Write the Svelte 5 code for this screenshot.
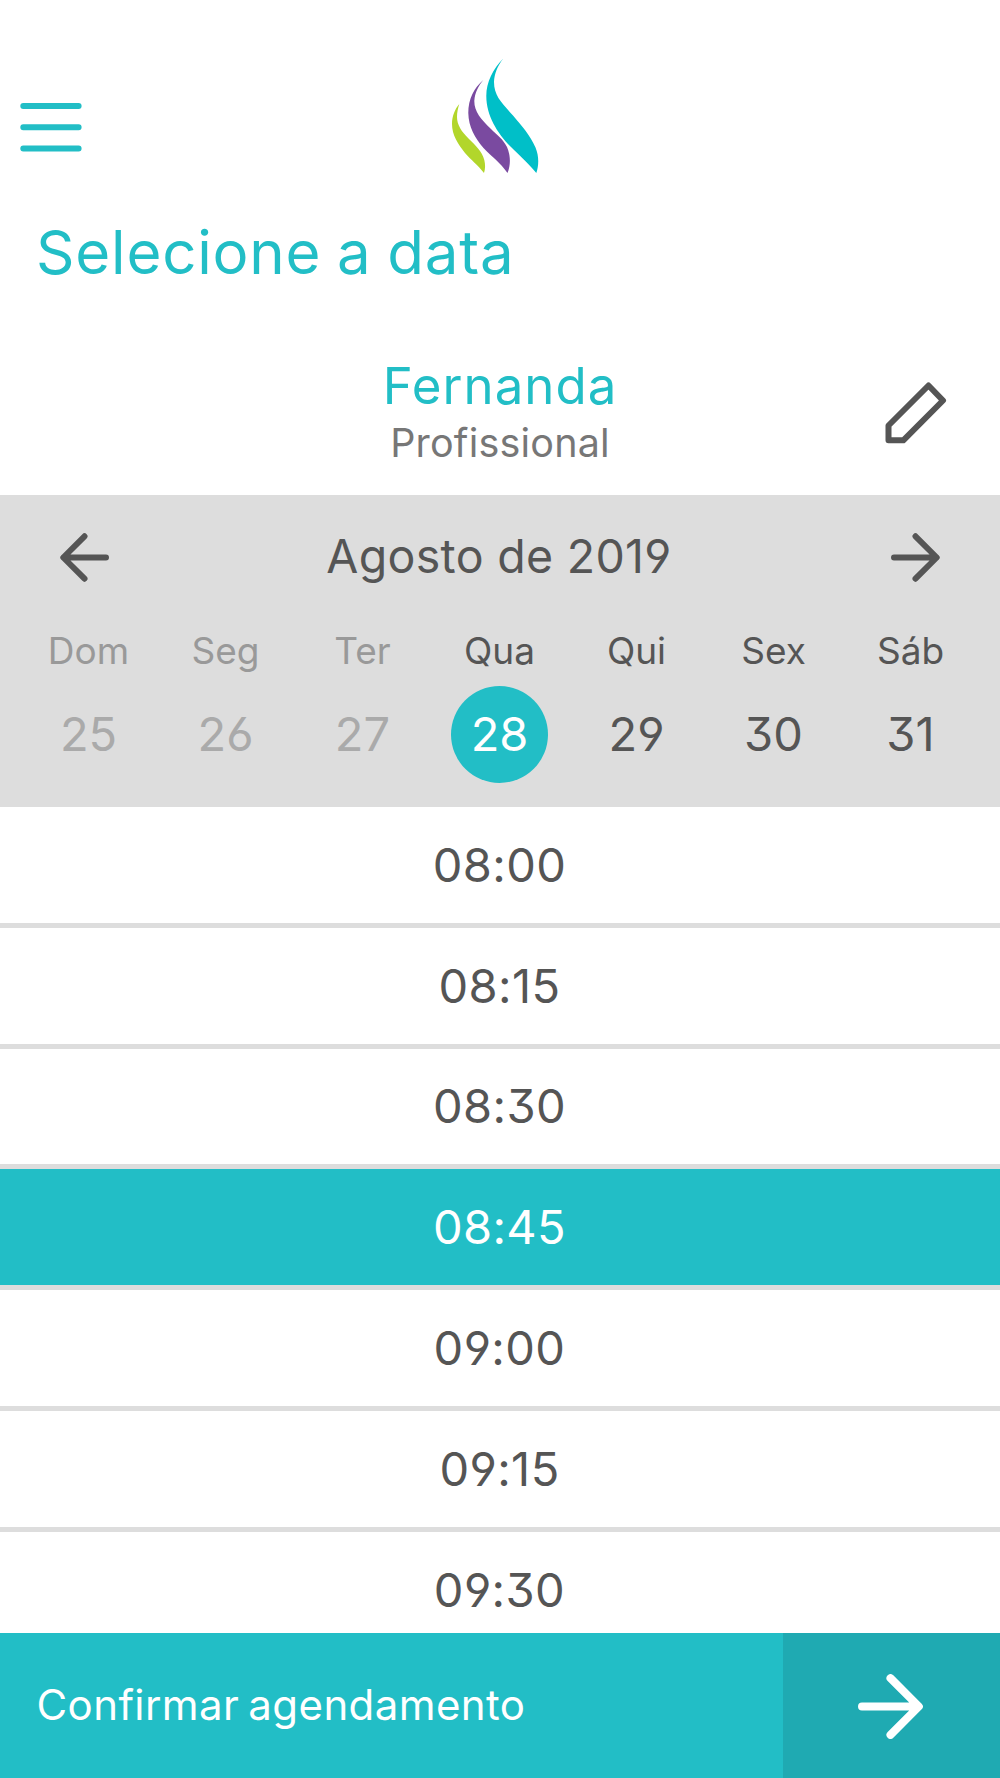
<script>
  let selectedDay = 28;
  let selectedTime = "08:45";

  const days = [
    { name: "Dom", number: 25, past: true },
    { name: "Seg", number: 26, past: true },
    { name: "Ter", number: 27, past: true },
    { name: "Qua", number: 28 },
    { name: "Qui", number: 29 },
    { name: "Sex", number: 30 },
    { name: "Sáb", number: 31 },
  ];

  const times = ["08:00", "08:15", "08:30", "08:45", "09:00", "09:15", "09:30"];
</script>

<main>
  <header>
    <button class="menu" aria-label="Menu">
      <svg width="62" height="50" viewBox="0 0 62 50">
        <path d="M3.3 4H58.6M3.3 25.2H58.6M3.3 46.5H58.6" />
      </svg>
    </button>
    <svg class="logo" width="96" height="116" viewBox="0 0 96 116">
      <path
        fill="#b2d62b"
        d="M7.300 46C3 51 0 58 0 66C0 77 6 86 13 95C19 102 26 107 32 115C33.500 111 33.300 106 32.300 102C30 93 23 87 17 81C9 73 5.200 67 5 59C5 54 6 50 7.300 46Z"
      />
      <path
        fill="#7a4aa0"
        d="M31.300 22C22 30 16.300 41 16.300 55C16.500 69 23 80 31.500 90C40 99 48 104 55.500 115C58.500 108 59 98 55 89C51 81 45 77 39 71C29 61 22.300 54 22.300 43C23 34 26.500 28 31.300 22Z"
      />
      <path
        fill="#00bfc8"
        d="M51.300 .5C41 11 34.300 24 34.300 38C34.300 58 46 76 59 89C68 98 75 104 84.300 115C87 107 87 98 83.500 89.500C78 77 70 68 61 57.500C50 45 42 38 42 24C42.300 16 45.500 8 51.300 .5Z"
      />
    </svg>
  </header>

  <h1>Selecione a data</h1>

  <section class="professional">
    <div class="who">
      <h2>Fernanda</h2>
      <p>Profissional</p>
    </div>
    <button class="edit" aria-label="Editar">
      <svg width="62" height="62" viewBox="0 0 62 62">
        <path d="M43.500 3.500L58 18.500L18.300 58.300H3.500V43.500Z" />
      </svg>
    </button>
  </section>

  <section class="calendar">
    <div class="month">
      <button aria-label="Mês anterior">
        <svg width="49" height="49" viewBox="0 0 49 49">
          <path d="M46 24.500H3.500M24.500 3.300L3.300 24.500L24.500 45.700" />
        </svg>
      </button>
      <span>Agosto de 2019</span>
      <button aria-label="Próximo mês">
        <svg width="49" height="49" viewBox="0 0 49 49">
          <path d="M3 24.500H45.500M24.500 3.300L45.700 24.500L24.500 45.700" />
        </svg>
      </button>
    </div>
    <div class="days">
      {#each days as day}
        <button
          class="day"
          class:past={day.past}
          class:selected={day.number === selectedDay}
          on:click={() => (selectedDay = day.number)}
        >
          <span class="name">{day.name}</span>
          <span class="number">{day.number}</span>
        </button>
      {/each}
    </div>
  </section>

  <section class="times">
    {#each times as time}
      <button
        class="time"
        class:selected={time === selectedTime}
        on:click={() => (selectedTime = time)}>{time}</button
      >
    {/each}
  </section>

  <button class="confirm">
    <span class="label">Confirmar agendamento</span>
    <span class="go">
      <svg width="65" height="65" viewBox="0 0 65 65">
        <path d="M4 32.500H60.500M32.500 4.200L60.800 32.500L32.500 60.800" />
      </svg>
    </span>
  </button>
</main>

<style>
  :global(body) {
    margin: 0;
    background-color: #fff;
  }

  main {
    display: flex;
    flex-direction: column;
    width: 1000px;
    height: 1778px;
    overflow: hidden;
    color: #555;
    font-family: Inter, "Liberation Sans", sans-serif;
    font-feature-settings: "cv03", "cv04", "cv09";
  }

  button {
    margin: 0;
    padding: 0;
    border: none;
    background: none;
    color: inherit;
    font: inherit;
    font-feature-settings: inherit;
    cursor: pointer;
  }

  svg {
    display: block;
    fill: none;
    stroke: #555;
    stroke-width: 6;
    stroke-linecap: round;
    stroke-linejoin: round;
  }

  h1,
  h2,
  p {
    margin: 0;
    font-weight: 400;
  }

  header {
    display: grid;
    grid-template-columns: 1fr auto 1fr;
    flex: none;
    box-sizing: border-box;
    height: 212px;
    padding: 58px 20px 0;
  }

  .menu {
    justify-self: start;
    align-self: start;
    margin-top: 44px;
  }

  .menu svg {
    stroke: #22bec6;
  }

  .logo {
    overflow: visible;
    stroke: none;
  }

  h1 {
    flex: none;
    height: 80px;
    padding-left: 36px;
    color: #22bec6;
    font-size: 60px;
    letter-spacing: 0.8px;
    word-spacing: -2px;
    line-height: 80px;
  }

  .professional {
    display: grid;
    grid-template-columns: 1fr auto 1fr;
    flex: none;
    box-sizing: border-box;
    height: 203px;
    padding-top: 64px;
  }

  .who {
    grid-column: 2;
    text-align: center;
  }

  h2 {
    color: #22bec6;
    font-size: 51px;
    letter-spacing: 1px;
    line-height: 60px;
  }

  .who p {
    color: #777;
    font-size: 39.5px;
    letter-spacing: 0.2px;
    line-height: 54px;
  }

  .edit {
    justify-self: end;
    align-self: start;
    margin: 26px 53.5px 0 0;
  }

  .calendar {
    flex: none;
    height: 312px;
    background-color: #ddd;
  }

  .month {
    display: flex;
    align-items: center;
    justify-content: space-between;
    height: 125px;
    padding: 0 60px;
    font-size: 46.5px;
    letter-spacing: 0.3px;
  }

  .month span {
    padding: 0 2px 4px 0;
  }

  .days {
    display: grid;
    grid-template-columns: repeat(7, 137px);
    justify-content: center;
    padding-right: 1px;
  }

  .day {
    display: flex;
    flex-direction: column;
    align-items: center;
  }

  .day.past .name {
    color: #999;
  }

  .day.past .number {
    color: #aaa;
  }

  .name {
    height: 66px;
    font-size: 37px;
    line-height: 62px;
  }

  .number {
    width: 97px;
    height: 97px;
    border-radius: 50%;
    font-size: 47px;
    line-height: 95px;
  }

  .day.selected .number {
    background-color: #22bec6;
    color: #fff;
  }

  .times {
    flex: 1;
    min-height: 0;
    overflow: hidden;
  }

  .time {
    display: block;
    box-sizing: border-box;
    width: 100%;
    height: 120.8px;
    padding: 0 1px 1px 0;
    border-bottom: 5px solid #ddd;
    font-size: 47px;
    letter-spacing: 0.4px;
  }

  .time.selected {
    background-color: #22bec6;
    color: #fff;
  }

  .confirm {
    display: flex;
    flex: none;
    height: 145px;
    background-color: #22bec6;
    color: #fff;
    font-size: 42px;
    letter-spacing: 0.4px;
    word-spacing: -3px;
    text-align: left;
  }

  .label {
    flex: 1;
    padding-left: 36.5px;
    line-height: 144px;
  }

  .go {
    box-sizing: border-box;
    width: 217px;
    height: 145px;
    padding: 41px 0 0 75px;
    background-color: #1faab2;
  }

  .go svg {
    stroke: #fff;
    stroke-width: 8;
  }
</style>
